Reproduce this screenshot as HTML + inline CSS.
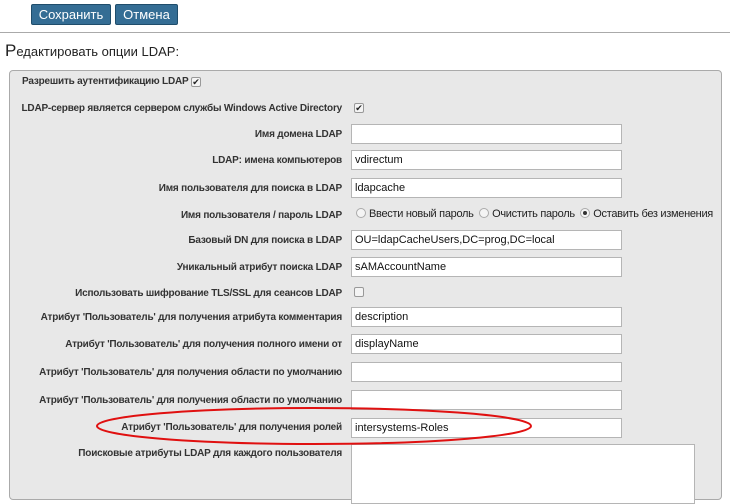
<!DOCTYPE html>
<html><head><meta charset="utf-8"><style>
*{margin:0;padding:0;box-sizing:border-box}
body{width:732px;height:485px;background:#fff;position:relative;overflow:hidden;font-family:"Liberation Sans",Arial,sans-serif;}
.btn{position:absolute;top:4px;height:21px;background:#346d94;color:#fff;font-size:13px;line-height:19px;text-align:center;border:1px solid #1f4d6b;border-radius:2px}
.hr{position:absolute;left:0;top:32px;width:730px;height:1px;background:#aaa}
.title{position:absolute;left:5px;top:41px;font-size:13px;color:#222}
.title b{font-weight:normal;font-size:17px}
.panel{position:absolute;left:9px;top:70px;width:713px;height:430px;background:#e8e8e8;border:1px solid #aaa;border-radius:4px}
.lbl{position:absolute;right:390px;font-size:10px;letter-spacing:-0.2px;font-weight:bold;color:#333;white-space:nowrap;margin-top:4px}
.in{position:absolute;left:351px;width:271px;height:20px;background:#fff;border:1px solid #b5b5b5;font-size:11px;line-height:18px;padding-left:3px;color:#111}
.cb{position:absolute;width:10px;height:10px;border:1px solid #999;border-radius:2px;background:#f4f4f4;font-size:9px;line-height:8px;text-align:center;color:#222}
.rd{display:inline-block;width:10px;height:10px;border:1px solid #aaa;border-radius:50%;background:#f4f4f4;vertical-align:-1px;margin-right:3px;position:relative}
.rd.on:after{content:"";position:absolute;left:2px;top:2px;width:4px;height:4px;border-radius:50%;background:#333}
.radios{position:absolute;left:356px;top:208px;font-size:11px;letter-spacing:-0.3px;color:#222;white-space:nowrap}
</style></head><body>
<div class="btn" style="left:31px;width:80px">Сохранить</div>
<div class="btn" style="left:115px;width:63px">Отмена</div>
<div class="hr"></div>
<div class="title"><b>Р</b>едактировать опции LDAP:</div>
<div class="panel"></div>
<div class="lbl" style="left:22px;right:auto;top:72px">Разрешить аутентификацию LDAP</div>
<div class="cb" style="left:191px;top:77px">✔</div>
<div class="lbl" style="top:99px">LDAP-сервер является сервером службы Windows Active Directory</div>
<div class="cb" style="left:354px;top:103px">✔</div>
<div class="lbl" style="top:125px">Имя домена LDAP</div><div class="in" style="top:124px"></div>
<div class="lbl" style="top:151px">LDAP: имена компьютеров</div><div class="in" style="top:150px">vdirectum</div>
<div class="lbl" style="top:179px">Имя пользователя для поиска в LDAP</div><div class="in" style="top:178px">ldapcache</div>
<div class="lbl" style="top:206px">Имя пользователя / пароль LDAP</div>
<div class="radios"><span class="rd"></span>Ввести новый пароль&nbsp;&nbsp;<span class="rd"></span>Очистить пароль&nbsp;&nbsp;<span class="rd on"></span>Оставить без изменения</div>
<div class="lbl" style="top:231px">Базовый DN для поиска в LDAP</div><div class="in" style="top:230px">OU=ldapCacheUsers,DC=prog,DC=local</div>
<div class="lbl" style="top:258px">Уникальный атрибут поиска LDAP</div><div class="in" style="top:257px">sAMAccountName</div>
<div class="lbl" style="top:284px">Использовать шифрование TLS/SSL для сеансов LDAP</div>
<div class="cb" style="left:354px;top:287px"></div>
<div class="lbl" style="top:308px">Атрибут 'Пользователь' для получения атрибута комментария</div><div class="in" style="top:307px">description</div>
<div class="lbl" style="top:335px">Атрибут 'Пользователь' для получения полного имени от</div><div class="in" style="top:334px">displayName</div>
<div class="lbl" style="top:363px">Атрибут 'Пользователь' для получения области по умолчанию</div><div class="in" style="top:362px"></div>
<div class="lbl" style="top:391px">Атрибут 'Пользователь' для получения области по умолчанию</div><div class="in" style="top:390px"></div>
<div class="lbl" style="top:418px">Атрибут 'Пользователь' для получения ролей</div><div class="in" style="top:418px">intersystems-Roles</div>
<div class="lbl" style="top:444px">Поисковые атрибуты LDAP для каждого пользователя</div>
<div class="in" style="top:444px;width:344px;height:60px"></div>
<svg style="position:absolute;left:0;top:0" width="732" height="485"><ellipse cx="314" cy="426" rx="217" ry="18" fill="none" stroke="#e01010" stroke-width="2"/></svg>
</body></html>
